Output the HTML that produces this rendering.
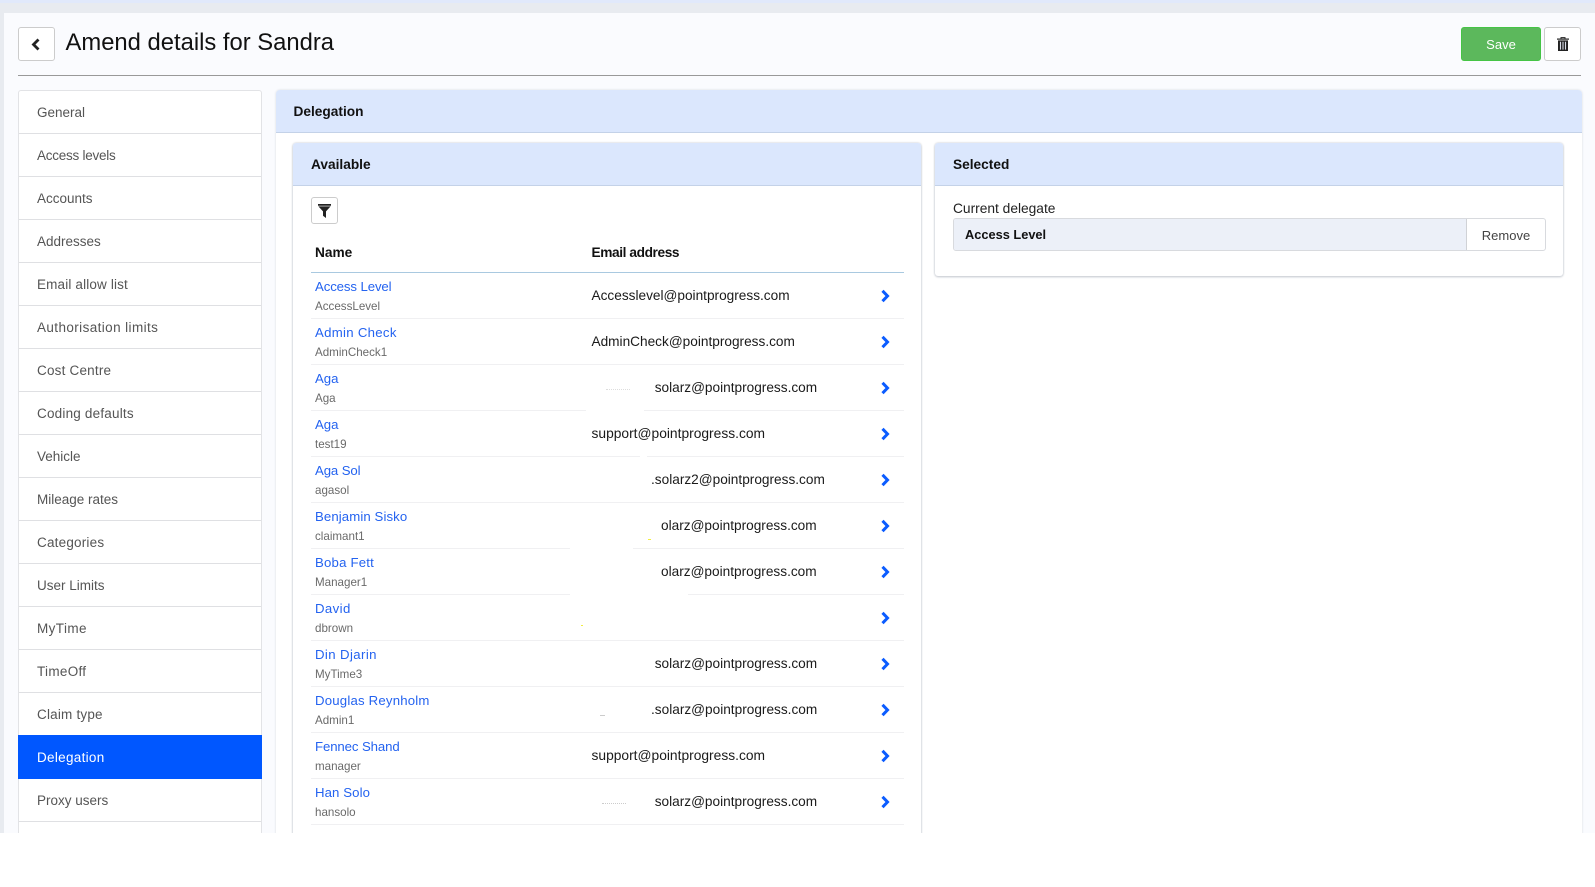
<!DOCTYPE html>
<html lang="en">
<head>
<meta charset="utf-8">
<title>Amend details for Sandra</title>
<style>
*{box-sizing:border-box}
html,body{margin:0;padding:0;background:#fff}
body{width:1595px;height:887px;position:relative;overflow:hidden;font-family:"Liberation Sans",sans-serif;color:#111}
#view{position:absolute;left:0;top:0;width:1595px;height:833px;overflow:hidden;background:#e8ebf0}
#band{position:absolute;left:0;top:0;width:1595px;height:3px;background:#e1e9fb}
#page{position:absolute;left:4px;top:13px;width:1591px;height:820px;background:#fafbfe}
#back,#trash,#filter{position:absolute;background:#fff;border:1px solid #ccc;border-radius:3px;display:flex;align-items:center;justify-content:center}
#back{left:18px;top:27px;width:37px;height:34px}
#trash{left:1544px;top:27px;width:37px;height:34px}
#filter{left:311px;top:197px;width:27px;height:27px}
h1{position:absolute;left:65.5px;top:28px;margin:0;font-weight:400;font-size:23.8px;line-height:30px;color:#111}
#save{position:absolute;left:1461px;top:27px;width:80px;height:34px;background:#5cb85c;border:1px solid #45c445;border-radius:3px;color:#fff;font-size:13px;line-height:34px;text-align:center}
#hr{position:absolute;left:18px;top:75px;width:1563px;height:1px;background:#999}
#side{position:absolute;left:18px;top:90px;width:244px;height:760px;background:#fff;border:1px solid #e2e3e6;border-top-left-radius:3px;border-top-right-radius:3px}
#side div{position:absolute;left:0;width:242px;height:43px;border-bottom:1px solid #dfe0e3;padding-left:18px;font-size:13.5px;line-height:44px;color:#555}
#side div.on{left:-1px;width:244px;height:44px;background:#0057ff;color:#fff;border:0;padding-left:19px;line-height:45px}
#main{position:absolute;left:276px;top:90px;width:1306px;height:760px;background:#fff;border-radius:4px 4px 0 0;box-shadow:0 0 2px #d5d8de}
.head{background:#dbe7fd;border-bottom:1px solid #c4d2e8;font-weight:700;font-size:13.7px;color:#111}
#mainh{position:absolute;left:276px;top:90px;width:1306px;height:43px;line-height:43px;padding-left:17.5px;border-radius:4px 4px 0 0}
.card{position:absolute;top:143px;background:#fff;border-radius:3px;box-shadow:0 0 2px #c8ccd3,0 1px 2px #c8ccd3}
#avail{left:293px;width:628px;height:720px}
#sel{left:935px;width:628px;height:133px}
.card .head{height:43px;line-height:43px;padding-left:18px;border-radius:3px 3px 0 0}
.th{position:absolute;top:244px;font-weight:700;font-size:13.7px;line-height:18px;color:#111}
#thl{position:absolute;left:311px;top:272px;width:593px;height:1px;background:#a9c9e0}
#rows{position:absolute;left:311px;top:273px;width:593px}
.r{position:relative;height:46px;border-bottom:1px solid #f0f0f2}
.r b{position:absolute;left:4px;top:5px;font-weight:400;font-size:13.2px;line-height:18px;color:#2463f0;white-space:nowrap}
.r i{position:absolute;left:4px;top:25px;font-style:normal;font-size:11.6px;line-height:18px;color:#6a6a6a}
.r span{position:absolute;top:14px;font-size:13.65px;line-height:18px;color:#1a1a1a;white-space:nowrap}
.r svg{position:absolute;left:569px;top:16px}
.w{position:absolute;background:#fff}
.d{position:absolute;height:1px}
#lab{position:absolute;left:953px;top:200px;font-size:13.75px;line-height:18px;color:#222}
#inp{position:absolute;left:953px;top:218px;width:593px;height:33px;border:1px solid #d8dade;border-radius:3px;background:#fff;overflow:hidden}
#inp .v{position:absolute;left:0;top:0;width:513px;height:31px;background:#ecf0f8;border-right:1px solid #d0d2d6;padding-left:11px;font-weight:700;font-size:12.8px;line-height:32px;color:#111}
#inp .x{position:absolute;left:513px;top:0;width:78px;height:31px;text-align:center;font-size:13px;line-height:33px;color:#444}
</style>
</head>
<body>
<div id="view">
<div id="band"></div>
<div id="page"></div>

<div id="back"><svg width="11" height="13" viewBox="0 0 11 13"><path d="M7.5 1.5 2.5 6.5l5 5" fill="none" stroke="#222" stroke-width="2.8"/></svg></div>
<h1>Amend details for Sandra</h1>
<div id="save">Save</div>
<div id="trash"><svg width="12" height="14" viewBox="0 0 12 14"><path d="M4 1.5V.6h4v.9" fill="none" stroke="#222" stroke-width="1"/><path d="M0 1.5h12v1.2H0z" fill="#222"/><path d="M1 3.4h10V14H1z" fill="#222"/><path d="M3.5 4.8v7.8M6 4.8v7.8M8.5 4.8v7.8" stroke="#d8dce8" stroke-width="1.1"/></svg></div>
<div id="hr"></div>

<div id="side">
<div style="top:0">General</div>
<div style="top:43px;letter-spacing:-.25px">Access levels</div>
<div style="top:86px">Accounts</div>
<div style="top:129px">Addresses</div>
<div style="top:172px;letter-spacing:.15px">Email allow list</div>
<div style="top:215px;letter-spacing:.4px">Authorisation limits</div>
<div style="top:258px;letter-spacing:.2px">Cost Centre</div>
<div style="top:301px;letter-spacing:.2px">Coding defaults</div>
<div style="top:344px">Vehicle</div>
<div style="top:387px">Mileage rates</div>
<div style="top:430px;letter-spacing:.2px">Categories</div>
<div style="top:473px">User Limits</div>
<div style="top:516px;letter-spacing:.4px">MyTime</div>
<div style="top:559px;letter-spacing:.3px">TimeOff</div>
<div style="top:602px;letter-spacing:.2px">Claim type</div>
<div class="on" style="top:644px;letter-spacing:.3px">Delegation</div>
<div style="top:688px">Proxy users</div>
</div>

<div id="main"></div>
<div id="mainh" class="head">Delegation</div>

<div id="avail" class="card"><div class="head">Available</div></div>
<div id="filter"><svg width="13" height="14" viewBox="0 0 13 14"><path d="M0 0h13v1.8H0zM.4 2.4h12.2L8 7.4V14L5 11.8V7.4z" fill="#222"/></svg></div>
<div class="th" style="left:315px">Name</div>
<div class="th" style="left:591.5px;letter-spacing:-.4px">Email address</div>
<div id="thl"></div>

<div id="rows">
<div class="r"><b style="letter-spacing:-.1px">Access Level</b><i>AccessLevel</i><span style="left:280.5px">Accesslevel@pointprogress.com</span><svg width="10" height="14" viewBox="0 0 10 14"><path d="M2.5 1.8 7.5 7l-5 5.2" fill="none" stroke="#0b5cff" stroke-width="3"/></svg></div>
<div class="r"><b style="letter-spacing:.3px">Admin Check</b><i>AdminCheck1</i><span style="left:280.5px">AdminCheck@pointprogress.com</span><svg width="10" height="14" viewBox="0 0 10 14"><path d="M2.5 1.8 7.5 7l-5 5.2" fill="none" stroke="#0b5cff" stroke-width="3"/></svg></div>
<div class="r"><b>Aga</b><i>Aga</i><span style="left:343.7px">solarz@pointprogress.com</span><svg width="10" height="14" viewBox="0 0 10 14"><path d="M2.5 1.8 7.5 7l-5 5.2" fill="none" stroke="#0b5cff" stroke-width="3"/></svg></div>
<div class="r"><b>Aga</b><i>test19</i><span style="left:280.5px;font-size:13.8px">support@pointprogress.com</span><svg width="10" height="14" viewBox="0 0 10 14"><path d="M2.5 1.8 7.5 7l-5 5.2" fill="none" stroke="#0b5cff" stroke-width="3"/></svg></div>
<div class="r"><b style="letter-spacing:-.1px">Aga Sol</b><i>agasol</i><span style="left:340px">.solarz2@pointprogress.com</span><svg width="10" height="14" viewBox="0 0 10 14"><path d="M2.5 1.8 7.5 7l-5 5.2" fill="none" stroke="#0b5cff" stroke-width="3"/></svg></div>
<div class="r"><b style="letter-spacing:.1px">Benjamin Sisko</b><i>claimant1</i><span style="left:350px">olarz@pointprogress.com</span><svg width="10" height="14" viewBox="0 0 10 14"><path d="M2.5 1.8 7.5 7l-5 5.2" fill="none" stroke="#0b5cff" stroke-width="3"/></svg></div>
<div class="r"><b style="letter-spacing:.2px">Boba Fett</b><i>Manager1</i><span style="left:350px">olarz@pointprogress.com</span><svg width="10" height="14" viewBox="0 0 10 14"><path d="M2.5 1.8 7.5 7l-5 5.2" fill="none" stroke="#0b5cff" stroke-width="3"/></svg></div>
<div class="r"><b style="letter-spacing:.4px">David</b><i>dbrown</i><svg width="10" height="14" viewBox="0 0 10 14"><path d="M2.5 1.8 7.5 7l-5 5.2" fill="none" stroke="#0b5cff" stroke-width="3"/></svg></div>
<div class="r"><b style="letter-spacing:.4px">Din Djarin</b><i>MyTime3</i><span style="left:343.7px">solarz@pointprogress.com</span><svg width="10" height="14" viewBox="0 0 10 14"><path d="M2.5 1.8 7.5 7l-5 5.2" fill="none" stroke="#0b5cff" stroke-width="3"/></svg></div>
<div class="r"><b style="letter-spacing:.2px">Douglas Reynholm</b><i>Admin1</i><span style="left:340px">.solarz@pointprogress.com</span><svg width="10" height="14" viewBox="0 0 10 14"><path d="M2.5 1.8 7.5 7l-5 5.2" fill="none" stroke="#0b5cff" stroke-width="3"/></svg></div>
<div class="r"><b style="letter-spacing:-.1px">Fennec Shand</b><i>manager</i><span style="left:280.5px;font-size:13.8px">support@pointprogress.com</span><svg width="10" height="14" viewBox="0 0 10 14"><path d="M2.5 1.8 7.5 7l-5 5.2" fill="none" stroke="#0b5cff" stroke-width="3"/></svg></div>
<div class="r"><b style="letter-spacing:.1px">Han Solo</b><i>hansolo</i><span style="left:343.7px">solarz@pointprogress.com</span><svg width="10" height="14" viewBox="0 0 10 14"><path d="M2.5 1.8 7.5 7l-5 5.2" fill="none" stroke="#0b5cff" stroke-width="3"/></svg></div>
</div>

<div class="w" style="left:586px;top:410px;width:58px;height:1px"></div>
<div class="w" style="left:640px;top:456px;width:7px;height:1px"></div>
<div class="w" style="left:570px;top:548px;width:63px;height:1px"></div>
<div class="w" style="left:570px;top:594px;width:118px;height:1px"></div>

<div class="d" style="left:606px;top:389px;width:24px;border-top:1px dotted #ddd"></div>
<div class="d" style="left:602px;top:803px;width:24px;border-top:1px dotted #ccc"></div>
<div class="d" style="left:600px;top:715px;width:5px;background:#ccc"></div>
<div class="d" style="left:648px;top:539px;width:3px;background:#f2ee40"></div>
<div class="d" style="left:581px;top:625px;width:2px;background:#f2ee40"></div>

<div id="sel" class="card"><div class="head">Selected</div></div>
<div id="lab">Current delegate</div>
<div id="inp"><div class="v">Access Level</div><div class="x">Remove</div></div>
</div>
</body>
</html>
